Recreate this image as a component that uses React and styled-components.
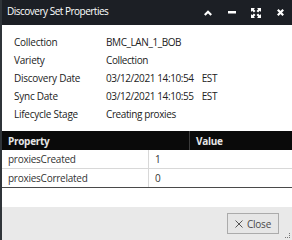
import React from "react";
import styled, { createGlobalStyle } from "styled-components";

const Global = createGlobalStyle`
  html, body { margin: 0; padding: 0; }
  body {
    background: #2f3439;
    font-family: "Open Sans", "Liberation Sans", sans-serif;
    width: 292px;
    height: 240px;
    overflow: hidden;
  }
`;

const Dialog = styled.div`
  margin-left: 2px;
  width: 290px;
  height: 240px;
  background: #fff;
  display: flex;
  flex-direction: column;
  position: relative;
`;

const TitleBar = styled.div`
  height: 25px;
  background: #1c1f25;
  display: flex;
  align-items: center;
  padding: 0 0 0 5px;
  color: #fff;
`;

const Title = styled.div`
  flex: 1;
  font-size: 10px;
  letter-spacing: -0.5px;
  margin-top: -3px;
`;

const Tools = styled.div`
  display: flex;
  align-items: center;
`;

const ToolBtn = styled.span`
  width: 24px;
  height: 16px;
  display: flex;
  align-items: center;
  justify-content: center;
`;

const Info = styled.div`
  display: grid;
  grid-template-columns: 92px 1fr;
  padding: 8px 0 0 12px;
`;

const Label = styled.div`
  font-size: 10px;
  letter-spacing: -0.25px;
  line-height: 18px;
  color: #222;
`;

const Value = styled.div`
  font-size: 10px;
  letter-spacing: -0.4px;
  line-height: 18px;
  color: #222;
`;

const Zone = styled.span`
  margin-left: ${(p) => p.gap || 0}px;
`;

const Table = styled.div`
  margin-top: 8px;
  border-bottom: 1px solid #4a4a4a;
`;

const HeadRow = styled.div`
  display: grid;
  grid-template-columns: 187px 1fr;
  height: 19px;
  background: #0a0a0a;
  color: #e6e6e6;
  font-size: 10px;
  letter-spacing: -0.3px;
  font-weight: 700;
`;

const HeadCell = styled.div`
  padding-left: ${(p) => p.pad}px;
  display: flex;
  align-items: center;
  border-left: ${(p) => (p.divided ? "1px solid #3c3c3c" : "none")};
`;

const Row = styled.div`
  display: grid;
  grid-template-columns: 146px 1fr;
  height: 18px;
  border-bottom: ${(p) => (p.last ? "none" : "1px solid #d8d8d8")};
  font-size: 10px;
  letter-spacing: -0.25px;
  color: #333;
`;

const Cell = styled.div`
  padding-left: ${(p) => p.pad}px;
  display: flex;
  align-items: center;
  border-left: ${(p) => (p.divided ? "1px solid #d8d8d8" : "none")};
`;

const Spacer = styled.div`
  flex: 1;
`;

const Footer = styled.div`
  height: 33px;
  background: #e9e9e9;
  display: flex;
  align-items: flex-start;
  justify-content: flex-end;
  padding: 6px 13px 0 0;
  box-sizing: border-box;
`;

const CloseButton = styled.button`
  width: 52px;
  height: 21px;
  border: 1px solid #ababab;
  background: #e6e6e6;
  color: #4a4a4a;
  font-family: "Open Sans", "Liberation Sans", sans-serif;
  font-size: 10px;
  letter-spacing: -0.2px;
  padding: 0;
  display: flex;
  align-items: center;
  justify-content: center;
  gap: 4px;
`;

const Grip = styled.svg`
  position: absolute;
  right: 1px;
  bottom: 1px;
`;

export default function App() {
  return (
    <>
      <Global />
      <Dialog>
        <TitleBar>
          <Title>Discovery Set Properties</Title>
          <Tools>
            <ToolBtn>
              <svg width="8" height="6" viewBox="0 0 8 6">
                <path d="M0.8 5 L4 1.8 L7.2 5" stroke="#fff" strokeWidth="2.2" fill="none" />
              </svg>
            </ToolBtn>
            <ToolBtn>
              <svg width="8" height="3" viewBox="0 0 8 3">
                <rect x="0" y="0" width="8" height="2.5" fill="#fff" />
              </svg>
            </ToolBtn>
            <ToolBtn>
              <svg width="10" height="10" viewBox="0 0 10 10" fill="#fff">
                <path d="M0 0 H4 L2.8 1.2 L4.5 2.9 L2.9 4.5 L1.2 2.8 L0 4 Z" />
                <path d="M10 0 V4 L8.8 2.8 L7.1 4.5 L5.5 2.9 L7.2 1.2 L6 0 Z" />
                <path d="M0 10 V6 L1.2 7.2 L2.9 5.5 L4.5 7.1 L2.8 8.8 L4 10 Z" />
                <path d="M10 10 H6 L7.2 8.8 L5.5 7.1 L7.1 5.5 L8.8 7.2 L10 6 Z" />
              </svg>
            </ToolBtn>
            <ToolBtn>
              <svg width="7" height="7" viewBox="0 0 7 7">
                <path d="M0.8 0.8 L6.2 6.2 M6.2 0.8 L0.8 6.2" stroke="#fff" strokeWidth="2.2" />
              </svg>
            </ToolBtn>
          </Tools>
        </TitleBar>
        <Info>
          <Label>Collection</Label>
          <Value>BMC_LAN_1_BOB</Value>
          <Label>Variety</Label>
          <Value>Collection</Value>
          <Label>Discovery Date</Label>
          <Value>
            03/12/2021 14:10:54<Zone gap={8}>EST</Zone>
          </Value>
          <Label>Sync Date</Label>
          <Value>
            03/12/2021 14:10:55<Zone gap={8}>EST</Zone>
          </Value>
          <Label>Lifecycle Stage</Label>
          <Value>Creating proxies</Value>
        </Info>
        <Table>
          <HeadRow>
            <HeadCell pad={6}>Property</HeadCell>
            <HeadCell pad={6} divided>Value</HeadCell>
          </HeadRow>
          <Row>
            <Cell pad={6}>proxiesCreated</Cell>
            <Cell pad={6} divided>1</Cell>
          </Row>
          <Row last>
            <Cell pad={6}>proxiesCorrelated</Cell>
            <Cell pad={6} divided>0</Cell>
          </Row>
        </Table>
        <Spacer />
        <Footer>
          <CloseButton>
            <svg width="8" height="8" viewBox="0 0 8 8">
              <path d="M0.5 0.5 L7.5 7.5 M7.5 0.5 L0.5 7.5" stroke="#555" strokeWidth="1" />
            </svg>
            Close
          </CloseButton>
        </Footer>
        <Grip width="6" height="6" viewBox="0 0 6 6">
          <rect x="4" y="0" width="1" height="1" fill="#777" />
          <rect x="4" y="2" width="1" height="1" fill="#777" />
          <rect x="4" y="4" width="1" height="1" fill="#777" />
          <rect x="2" y="4" width="1" height="1" fill="#777" />
          <rect x="0" y="4" width="1" height="1" fill="#777" />
        </Grip>
      </Dialog>
    </>
  );
}
